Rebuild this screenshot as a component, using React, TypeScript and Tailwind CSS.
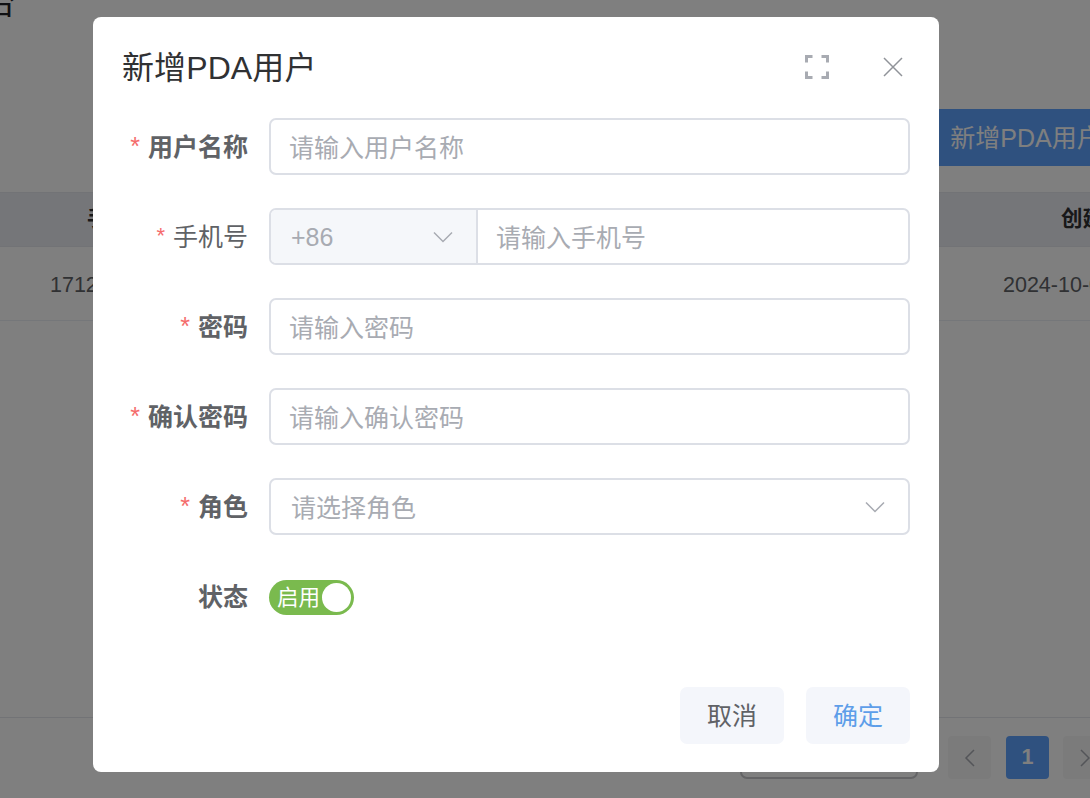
import React from "react";

const fontStack = "font-['Liberation_Sans','Noto_Sans_CJK_SC',sans-serif]";

const Chevron: React.FC<{ className?: string }> = ({ className }) => (
  <svg className={className} width="20" height="12" viewBox="0 0 20 12" fill="none">
    <path d="M1 1.5 10 10.5 19 1.5" stroke="#a8abb2" strokeWidth="1.5" />
  </svg>
);

const Label: React.FC<{ text: string; required?: boolean; bold?: boolean }> = ({
  text,
  required = true,
  bold = true,
}) => (
  <div className="w-[126px] shrink-0 mr-[21px] flex items-center justify-end text-[25px] text-[#606266] translate-y-px">
    {required && (
      <span
        className={
          bold
            ? "text-[#f56c6c] font-normal mr-[7px] relative top-[-1px] -translate-x-px"
            : "text-[#f56c6c] font-normal text-[22px] mr-[8px] relative top-[-2px]"
        }
      >
        *
      </span>
    )}
    <span className={bold ? "font-bold" : "font-normal"}>{text}</span>
  </div>
);

const TextField: React.FC<{ placeholder: string }> = ({ placeholder }) => (
  <input
    readOnly
    placeholder={placeholder}
    className="flex-1 min-w-0 h-full pl-[18px] pr-[20px] pt-[4px] bg-white border-2 border-[#dcdfe6] rounded-[7px] text-[25px] outline-none placeholder:text-[#a8abb2]"
  />
);

const Row: React.FC<{ children: React.ReactNode }> = ({ children }) => (
  <div className="flex items-center h-[57px] mb-[33px]">{children}</div>
);

const Background: React.FC = () => (
  <div className="flex flex-col h-full">
    <div className="h-[109px] shrink-0 overflow-hidden">
      <span className="block text-[32px] leading-none font-normal text-[#202124] -ml-[16px] -mt-[13px]">
        台
      </span>
    </div>
    <div className="flex justify-end -mr-[35px] shrink-0">
      <button className="h-[57px] w-[198px] pt-[2px] bg-[#5ea2ff] text-white text-[25px] rounded-[7px] whitespace-nowrap">
        新增PDA用户
      </button>
    </div>
    <div className="mt-[26px] h-[55px] shrink-0 flex items-center bg-[#eaedf2] border-y border-[#e4e7ed] text-[21.5px] font-bold text-[#303133]">
      <span className="ml-[87px]">手机号</span>
      <span className="ml-auto w-[29px] whitespace-nowrap">创建时间</span>
    </div>
    <div className="h-[74px] shrink-0 flex items-center pt-[3px] border-b border-[#ebeef5] text-[21.5px] text-[#606266]">
      <span className="ml-[50px]">17120000000</span>
      <span className="ml-auto w-[87px] whitespace-nowrap">2024-10-01 12:00:00</span>
    </div>
    <div className="mt-auto h-[81px] shrink-0 border-t border-[#e4e7ed] pt-[18px] pl-[740px] flex items-start">
      <div className="w-[178px] h-[43px] shrink-0 border-2 border-[#c8c9cc] rounded-[7px]" />
      <div className="ml-[30px] w-[43px] h-[43px] shrink-0 rounded-[4px] bg-[#f6f6f6] flex items-center justify-center">
        <svg width="12" height="20" viewBox="0 0 12 20" fill="none">
          <path d="M10 2 2 10 10 18" stroke="#a8abb2" strokeWidth="1.5" />
        </svg>
      </div>
      <div className="ml-[15px] w-[43px] h-[43px] shrink-0 rounded-[4px] bg-[#5ea2ff] text-white font-bold text-[21.5px] flex items-center justify-center">
        1
      </div>
      <div className="ml-[14px] w-[43px] h-[43px] shrink-0 rounded-[4px] bg-[#f6f6f6] flex items-center justify-center">
        <svg width="12" height="20" viewBox="0 0 12 20" fill="none">
          <path d="M2 2 10 10 2 18" stroke="#a8abb2" strokeWidth="1.5" />
        </svg>
      </div>
    </div>
  </div>
);

const App: React.FC = () => {
  return (
    <div className={`relative h-[798px] overflow-hidden bg-white ${fontStack}`}>
      <Background />
      <div className="absolute inset-0 bg-black/50 pl-[93px] pt-[17px]">
        <div className="w-[846px] h-[755px] bg-white rounded-[8px] px-[29px] flex flex-col">
          <div className="h-[100px] mb-px flex items-center shrink-0">
            <span className="text-[32px] text-[#303133] translate-y-px tracking-[0.1px]">新增PDA用户</span>
            <svg className="ml-auto mr-px" width="24" height="24" viewBox="0 0 24 24" fill="none">
              <path
                d="M1.5 7.5V1.5H7.5M16.5 1.5H22.5V7.5M22.5 16.5V22.5H16.5M7.5 22.5H1.5V16.5"
                stroke="#a8abb2"
                strokeWidth="3"
              />
            </svg>
            <svg className="ml-[52px] mr-[6px]" width="22" height="20" viewBox="0 0 22 20" fill="none">
              <path d="M2 1 20 19M20 1 2 19" stroke="#909399" strokeWidth="1.5" />
            </svg>
          </div>

          <Row>
            <Label text="用户名称" />
            <TextField placeholder="请输入用户名称" />
          </Row>
          <Row>
            <Label text="手机号" bold={false} />
            <div className="flex-1 h-full flex border-2 border-[#dcdfe6] rounded-[7px] overflow-hidden">
              <div className="w-[207px] shrink-0 bg-[#f5f7fa] border-r-2 border-[#dcdfe6] flex items-center justify-between pl-[20px] pr-[23px] text-[25px] text-[#a8abb2]">
                <span className="translate-y-px">+86</span>
                <Chevron />
              </div>
              <input
                readOnly
                placeholder="请输入手机号"
                className="flex-1 min-w-0 pl-[18px] pr-[20px] pt-[4px] text-[25px] outline-none placeholder:text-[#a8abb2]"
              />
            </div>
          </Row>
          <Row>
            <Label text="密码" />
            <TextField placeholder="请输入密码" />
          </Row>
          <Row>
            <Label text="确认密码" />
            <TextField placeholder="请输入确认密码" />
          </Row>
          <Row>
            <Label text="角色" />
            <div className="flex-1 h-full flex items-center justify-between border-2 border-[#dcdfe6] rounded-[7px] pl-[20px] pr-[23px] text-[25px] text-[#a8abb2]">
              <span className="translate-y-[2px]">请选择角色</span>
              <Chevron />
            </div>
          </Row>
          <Row>
            <Label text="状态" required={false} />
            <div className="w-[85px] h-[35px] translate-y-px rounded-full bg-[#7aba4e] flex items-center pl-[8px] pr-[3px] justify-between">
              <span className="text-[21.5px] text-white translate-y-px">启用</span>
              <span className="w-[29px] h-[29px] rounded-full bg-white" />
            </div>
          </Row>

          <div className="mt-[29px] flex justify-end gap-[22px]">
            <button className="w-[104px] h-[57px] pt-[2px] rounded-[7px] bg-[#f4f6fb] text-[25px] text-[#606266]">
              取消
            </button>
            <button className="w-[104px] h-[57px] pt-[2px] rounded-[7px] bg-[#f4f6fb] text-[25px] text-[#5e9ee9]">
              确定
            </button>
          </div>
        </div>
      </div>
    </div>
  );
};

export default App;
